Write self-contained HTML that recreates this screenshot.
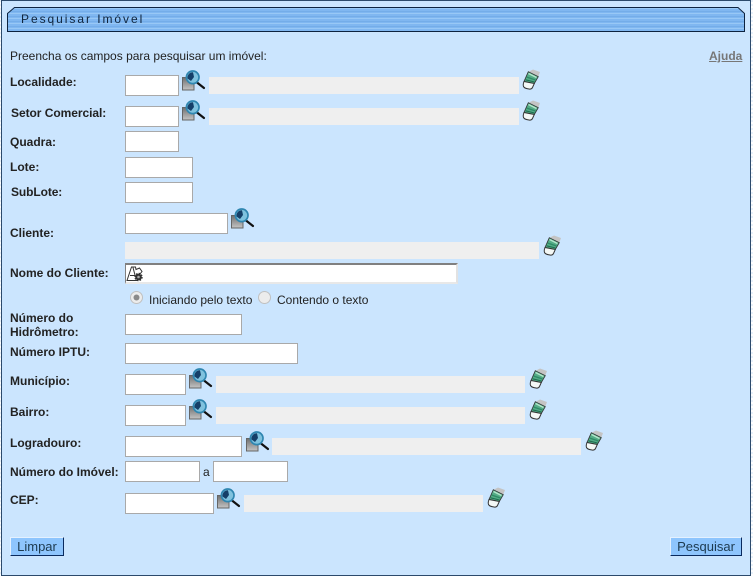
<!DOCTYPE html>
<html lang="pt">
<head>
<meta charset="utf-8">
<title>Pesquisar Imóvel</title>
<style>
html,body{margin:0;padding:0;width:753px;height:576px;overflow:hidden;background:#fff;}
body{position:relative;font-family:"Liberation Sans",Arial,sans-serif;font-size:12px;color:#222;}
#strip{position:absolute;left:0;top:0;width:753px;height:576px;background:repeating-linear-gradient(180deg,#e8f1fa 0,#e8f1fa 2px,#fff 2px,#fff 4px);}
#panel{position:absolute;left:1px;top:0;width:748px;height:574px;background:#cbe5fe;border:1px solid #2c4a6b;}
.a{position:absolute;}
.l{position:absolute;left:10px;font-weight:bold;white-space:nowrap;line-height:14px;color:#222;}
.i{position:absolute;box-sizing:border-box;height:21px;background:#fff;border:1px solid #a9a9a9;}
.g{position:absolute;height:17px;background:#efefef;}
.t{position:absolute;white-space:nowrap;line-height:14px;color:#222;}
.b{position:absolute;box-sizing:border-box;height:19px;background:#8ec5fd;border:1px solid;border-color:#e4f1ff #0a2a5e #0a2a5e #e4f1ff;text-align:center;line-height:17px;font-size:13px;color:#1d3a4f;}
svg{position:absolute;overflow:visible;}
</style>
</head>
<body>
<div id="strip"></div>
<div id="panel"></div>

<svg style="left:0;top:0" width="753" height="40">
<defs>
<pattern id="st" width="10" height="5" patternUnits="userSpaceOnUse" y="8">
<rect width="10" height="5" fill="#80b7f1"/>
<rect y="0" width="10" height="1" fill="#98c8f6"/>
<rect y="3" width="10" height="1" fill="#74ade9"/>
</pattern>
</defs>
<path d="M14.500 7.500H738L744.500 13.500V31.500H7.500V13.500Z" fill="url(#st)" stroke="#0d2340" stroke-width="1"/>
</svg>
<div class="t" style="left:21px;top:12px;letter-spacing:1.95px;color:#10253d;">Pesquisar Imóvel</div>

<div class="t" style="left:10px;top:49px;">Preencha os campos para pesquisar um imóvel:</div>
<div class="t" style="left:709px;top:49px;font-weight:bold;color:#777;text-decoration:underline;">Ajuda</div>

<div class="l" style="top:75px">Localidade:</div>
<div class="i" style="left:125px;top:75px;width:54px"></div>
<div class="g" style="left:209px;top:77px;width:310px"></div>

<div class="l" style="top:106px;left:11px;letter-spacing:-0.05px">Setor Comercial:</div>
<div class="i" style="left:125px;top:106px;width:54px"></div>
<div class="g" style="left:209px;top:108px;width:310px"></div>

<div class="l" style="top:135px">Quadra:</div>
<div class="i" style="left:125px;top:131px;width:54px"></div>

<div class="l" style="top:160px">Lote:</div>
<div class="i" style="left:125px;top:157px;width:68px"></div>

<div class="l" style="top:185px;left:11px;letter-spacing:-0.1px">SubLote:</div>
<div class="i" style="left:125px;top:182px;width:68px"></div>

<div class="l" style="top:226px">Cliente:</div>
<div class="i" style="left:125px;top:213px;width:103px"></div>
<div class="g" style="left:125px;top:242px;width:414px"></div>

<div class="l" style="top:266px">Nome do Cliente:</div>
<div class="a" style="left:125px;top:263px;width:333px;height:21px;box-sizing:border-box;background:#fff;border-style:solid;border-width:2px 2px 2px 1px;border-color:#808080 #e2e2e2 #e8e8e8 #808080;"></div>
<svg style="left:126px;top:264px" width="20" height="20" viewBox="0 0 20 20">
<path d="M1 16.500L5.500 3H9.500L10 5.500L13.500 4L16 7.500L14 10L11 16.500L4 16.500Z" fill="#fff" stroke="#333" stroke-width="1"/>
<path d="M4 11.500H8.500M7 3.500L9.500 13" fill="none" stroke="#333" stroke-width="1"/>
<circle cx="12.500" cy="13" r="3.300" fill="#333" stroke="#333" stroke-width="1.800" stroke-dasharray="1.500 1.100"/>
<circle cx="12.500" cy="13" r="1.300" fill="#aaa"/>
</svg>

<svg style="left:130px;top:291px" width="13" height="13" viewBox="0 0 13 13">
<circle cx="6.500" cy="6.500" r="6" fill="#ececec" stroke="#c0c0c0"/>
<circle cx="6.500" cy="6.500" r="3" fill="#8a8a8a"/>
</svg>
<div class="t" style="left:149px;top:293px;">Iniciando pelo texto</div>
<svg style="left:258px;top:291px" width="13" height="13" viewBox="0 0 13 13">
<circle cx="6.500" cy="6.500" r="6" fill="#ececec" stroke="#c0c0c0"/>
</svg>
<div class="t" style="left:277px;top:293px;">Contendo o texto</div>

<div class="l" style="top:311px">Número do<br>Hidrômetro:</div>
<div class="i" style="left:125px;top:314px;width:117px"></div>

<div class="l" style="top:345px">Número IPTU:</div>
<div class="i" style="left:125px;top:343px;width:173px"></div>

<div class="l" style="top:374px">Município:</div>
<div class="i" style="left:125px;top:374px;width:61px"></div>
<div class="g" style="left:216px;top:376px;width:309px"></div>

<div class="l" style="top:405px">Bairro:</div>
<div class="i" style="left:125px;top:405px;width:61px"></div>
<div class="g" style="left:216px;top:407px;width:309px"></div>

<div class="l" style="top:436px">Logradouro:</div>
<div class="i" style="left:125px;top:436px;width:117px"></div>
<div class="g" style="left:272px;top:438px;width:309px"></div>

<div class="l" style="top:465px">Número do Imóvel:</div>
<div class="i" style="left:125px;top:461px;width:75px"></div>
<div class="t" style="left:203px;top:465px;">a</div>
<div class="i" style="left:213px;top:461px;width:75px"></div>

<div class="l" style="top:493px">CEP:</div>
<div class="i" style="left:125px;top:493px;width:89px"></div>
<div class="g" style="left:244px;top:495px;width:239px"></div>

<div class="b" style="left:10px;top:537px;width:54px">Limpar</div>
<div class="b" style="left:670px;top:537px;width:72px">Pesquisar</div>

<!-- lens icons -->
<svg style="left:182px;top:70px" width="24" height="24" viewBox="0 0 24 24"><use href="#lens"/></svg>
<svg style="left:182px;top:100px" width="24" height="24" viewBox="0 0 24 24"><use href="#lens"/></svg>
<svg style="left:231px;top:208px" width="24" height="24" viewBox="0 0 24 24"><use href="#lens"/></svg>
<svg style="left:189px;top:368px" width="24" height="24" viewBox="0 0 24 24"><use href="#lens"/></svg>
<svg style="left:189px;top:399px" width="24" height="24" viewBox="0 0 24 24"><use href="#lens"/></svg>
<svg style="left:246px;top:431px" width="24" height="24" viewBox="0 0 24 24"><use href="#lens"/></svg>
<svg style="left:217px;top:488px" width="24" height="24" viewBox="0 0 24 24"><use href="#lens"/></svg>

<!-- eraser icons -->
<svg style="left:522px;top:69px" width="20" height="22" viewBox="0 0 20 22"><use href="#er"/></svg>
<svg style="left:522px;top:100px" width="20" height="22" viewBox="0 0 20 22"><use href="#er"/></svg>
<svg style="left:543px;top:235px" width="20" height="22" viewBox="0 0 20 22"><use href="#er"/></svg>
<svg style="left:529px;top:368px" width="20" height="22" viewBox="0 0 20 22"><use href="#er"/></svg>
<svg style="left:529px;top:399px" width="20" height="22" viewBox="0 0 20 22"><use href="#er"/></svg>
<svg style="left:585px;top:430px" width="20" height="22" viewBox="0 0 20 22"><use href="#er"/></svg>
<svg style="left:487px;top:487px" width="20" height="22" viewBox="0 0 20 22"><use href="#er"/></svg>

<svg width="0" height="0" style="left:0;top:0">
<defs>
<linearGradient id="doc" x1="0" y1="0" x2="0" y2="1">
<stop offset="0" stop-color="#6f6f6f"/>
<stop offset="1" stop-color="#c4c4c4"/>
</linearGradient>
<g id="lens">
<rect x="0.500" y="7.500" width="11.500" height="12.500" fill="url(#doc)" stroke="#666"/>
<path d="M15 12.500L22 18" stroke="#111" stroke-width="2.200" stroke-linecap="round"/>
<circle cx="10.700" cy="7.300" r="6.300" fill="#7fc2de" stroke="#2f86b0" stroke-width="1.700"/>
<path d="M5.500 8.500A5.500 5.500 0 0 1 11 2.200L12 7L9 11Z" fill="#153f68"/>
</g>
<g id="er">
<path d="M7 2.500L11 0.500L18 3L16.300 7.500Z" fill="#c4c4c4"/>
<path d="M6.300 2.700L16.300 7.700L12.300 14.500L2 12.500Z" fill="#54ad87" stroke="#333" stroke-width="0.800"/>
<path d="M6.500 4.500L14.500 8.500" stroke="#b4e6cc" stroke-width="1.400"/>
<path d="M4.500 8L13.500 11" stroke="#2f8a66" stroke-width="1.300"/>
<path d="M3.500 10.800L12.500 13" stroke="#1f6e50" stroke-width="1.100"/>
<path d="M2 12.500L12.300 14.500L10.500 18.500Q9.500 20.500 7 20Q2.500 19.500 1.500 17.500Q0.800 15.500 2 12.500Z" fill="#f4f8f6" stroke="#333" stroke-width="1"/>
</g>
</defs>
</svg>
</body>
</html>
